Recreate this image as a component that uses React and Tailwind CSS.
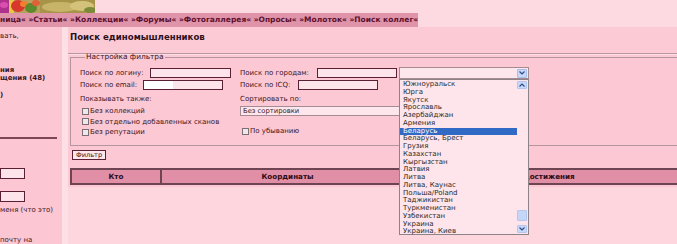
import React from 'react';

const cities = [
  'Южноуральск', 'Юрга', 'Якутск', 'Ярославль', 'Азербайджан', 'Армения', 'Беларусь',
  'Беларусь, Брест', 'Грузия', 'Казахстан', 'Кыргызстан', 'Латвия', 'Литва', 'Литва, Каунас',
  'Польша/Poland', 'Таджикистан', 'Туркменистан', 'Узбекистан', 'Украина', 'Украина, Киев'
];

const Logo = () => (
  <svg width="95" height="13" viewBox="0 0 95 13">
    <rect width="95" height="13" fill="#b8a060" />
    <rect x="0" y="0" width="10" height="13" fill="#b0308e" />
    <ellipse cx="4" cy="5" rx="4" ry="3" fill="#d84fb0" />
    <rect x="9" y="0" width="5" height="13" fill="#e8c840" />
    <ellipse cx="18" cy="6" rx="7" ry="6" fill="#d8382c" />
    <ellipse cx="24" cy="4" rx="4" ry="3" fill="#f08030" />
    <ellipse cx="31" cy="8" rx="6" ry="5" fill="#5c8a2c" />
    <ellipse cx="36" cy="3" rx="4" ry="3" fill="#e06038" />
    <rect x="40" y="0" width="55" height="13" fill="#a89448" />
    <ellipse cx="60" cy="7" rx="18" ry="5" fill="#c8b468" />
    <ellipse cx="82" cy="6" rx="12" ry="5" fill="#d4c27a" />
    <ellipse cx="90" cy="10" rx="6" ry="3" fill="#7a8a3a" />
  </svg>
);

const Box = ({ w, white }) => (
  <span className={`block shrink-0 h-[10px] border border-[#5a1f35] bg-[#fde3ea] ${w}`}>
    {white && <span className="block w-[29px] h-full bg-white" />}
  </span>
);

const Check = ({ label }) => (
  <div className="flex items-center h-[10.5px] leading-[10.5px]">
    <span className="block w-[7px] h-[7px] ml-[2px] mr-[1px] border border-[#7b6f75] bg-[#efe8eb]" />
    <span>{label}</span>
  </div>
);

export default function App() {
  return (
    <div className="w-[677px] h-[244px] overflow-hidden flex flex-col bg-[#fdd6de] font-['DejaVu_Sans',sans-serif] text-[7px] text-[#3a1626]">
      <div className="h-[13px] shrink-0 bg-[#fdd9e1] flex">
        <Logo />
      </div>

      <div className="h-[14px] shrink-0 flex bg-[#fdd9e1]">
        <div className="w-[418px] h-full bg-[#e094a9] text-[#5c1030] font-bold text-[7.5px] leading-[14px] whitespace-nowrap overflow-hidden">
          ница« »Статьи« »Коллекции« »Форумы« »Фотогаллерея« »Опросы« »Молоток« »Поиск коллег«
        </div>
      </div>

      <div className="flex flex-1 min-h-0">
        {/* left column, scrolled off */}
        <div className="w-[62px] shrink-0 bg-[#fcc7d2] flex flex-col whitespace-nowrap overflow-hidden">
          <div className="h-[5px]" />
          <div className="leading-[9px]">вать,</div>
          <div className="h-[25px]" />
          <div className="leading-[8px] font-bold">ния</div>
          <div className="leading-[8px] font-bold">щения (48)</div>
          <div className="h-[9px]" />
          <div className="leading-[8px] font-bold">)</div>
          <div className="h-[38px]" />
          <div className="h-[2px] w-[57px] bg-[#7a4658]" />
          <div className="h-[29px]" />
          <div className="w-[25px] h-[11px] border border-[#5a1f35] bg-[#fde3ea]" />
          <div className="h-[12px]" />
          <div className="w-[25px] h-[11px] border border-[#5a1f35] bg-[#fde3ea]" />
          <div className="h-[4px]" />
          <div className="leading-[8px]">меня (что это)</div>
          <div className="h-[22px]" />
          <div className="leading-[8px]">почту на</div>
        </div>
        <div className="w-[6px] shrink-0 bg-[#fde0e6]" />

        {/* main */}
        <div className="flex-1 min-w-0 flex flex-col">
          <div className="h-[26px] shrink-0 bg-[#fccad4] pl-[2px] pt-[5px] font-bold text-[8.6px] leading-[10px] text-[#2e0f1c]">
            Поиск единомышленников
          </div>
          <div className="h-px bg-[#bc94a0]" />
          <div className="h-px bg-[#fde0e6]" />

          <div className="bg-[#fcc8d3] pb-[2px]">
            <fieldset className="ml-[2px] w-[640px] border border-[#b3959e] pl-[9px] pt-[8px] pb-[7px]">
              <legend className="ml-[5px] px-[1px] leading-[4px] text-[7.4px]">Настройка фильтра</legend>

              <div className="flex h-[12px] items-center">
                <div className="w-[160px] flex items-center">
                  <span className="w-[70px]">Поиск по логину:</span>
                  <Box w="w-[81px]" />
                </div>
                <div className="flex items-center">
                  <span className="w-[77px]">Поиск по городам:</span>
                  <Box w="w-[80px]" />
                  <div className="relative ml-[2px] w-[130px] h-[12px] border border-[#a58c92] bg-[#fde6ec] flex justify-end items-center pr-px">
                    <span className="w-[10px] h-[9px] bg-[#c8d8f8] border border-[#a8bde8] rounded-[1px] flex items-center justify-center">
                      <svg width="6" height="4" viewBox="0 0 6 4"><path d="M0.5 0.5 L3 3 L5.5 0.5" fill="none" stroke="#2c4a8c" strokeWidth="1.2" /></svg>
                    </span>

                    {/* open list */}
                    <div className="absolute left-[-1px] top-[11px] w-[130px] h-[156px] z-10 border border-[#8e8488] bg-[#fde5eb] flex">
                      <div className="flex-1 pt-px">
                        {cities.map((c) => (
                          <div
                            key={c}
                            className={`h-[7.75px] leading-[7.75px] pl-[3px] text-[7px] ${c === 'Беларусь' ? 'bg-[#316ac5] text-white' : 'text-[#2a2a2a]'}`}
                          >
                            {c}
                          </div>
                        ))}
                      </div>
                      <div className="w-[10px] mr-px flex flex-col py-px">
                        <span className="h-[8px] bg-[#c8d8f8] border border-[#b4c6ee] rounded-[1px] flex items-center justify-center">
                          <svg width="6" height="4" viewBox="0 0 6 4"><path d="M0.5 3.5 L3 1 L5.5 3.5" fill="none" stroke="#2c4a8c" strokeWidth="1.2" /></svg>
                        </span>
                        <span className="flex-1 flex flex-col justify-end">
                          <span className="h-[11px] bg-[#c6d6f6] border border-[#b4c6ee] rounded-[1px]" />
                          <span className="h-[4px]" />
                        </span>
                        <span className="h-[8px] bg-[#c8d8f8] border border-[#b4c6ee] rounded-[1px] flex items-center justify-center">
                          <svg width="6" height="4" viewBox="0 0 6 4"><path d="M0.5 0.5 L3 3 L5.5 0.5" fill="none" stroke="#2c4a8c" strokeWidth="1.2" /></svg>
                        </span>
                      </div>
                    </div>
                  </div>
                </div>
              </div>

              <div className="flex h-[10px] items-center mt-px">
                <div className="w-[160px] flex items-center">
                  <span className="w-[63px]">Поиск по email:</span>
                  <Box w="w-[80px]" white />
                </div>
                <div className="flex items-center">
                  <span className="w-[58px]">Поиск по ICQ:</span>
                  <Box w="w-[80px]" />
                </div>
              </div>

              <div className="flex mt-[5px]">
                <div className="w-[160px]">
                  <div className="leading-[9px]">Показывать также:</div>
                  <div className="mt-[2px]">
                    <Check label="Без коллекций" />
                    <Check label="Без отдельно добавленных сканов" />
                    <Check label="Без репутации" />
                  </div>
                </div>
                <div>
                  <div className="leading-[9px]">Сортировать по:</div>
                  <div className="mt-[2px] w-[165px] h-[10px] border border-[#a58c92] bg-[#fde6ec] pl-[2px] leading-[8px] text-[6.8px]">
                    Без сортировки
                  </div>
                  <div className="mt-[10px]">
                    <Check label="По убыванию" />
                  </div>
                </div>
              </div>
            </fieldset>

            <button className="ml-[4px] mt-[4px] h-[10px] px-[3px] border border-[#5a1f35] bg-[#fde6ec] text-[6.6px] leading-[8px] text-[#2a1a20]">
              Фильтр
            </button>

            <div className="h-[8px]" />
            <div className="ml-[2px] w-[614px] h-[17px] flex bg-[#e08fa7] border-y-2 border-l-2 border-[#6e4352] font-bold text-[7.2px] text-[#2e0c18] leading-[13px]">
              <div className="w-[90px] text-center border-r-2 border-[#6e4352]">Кто</div>
              <div className="w-[252px] text-center border-r border-[#6e4352]">Координаты</div>
              <div className="flex-1 text-center">Достижения</div>
            </div>
          </div>
          <div className="flex-1 bg-[#fdd6de]" />
        </div>
      </div>
    </div>
  );
}
